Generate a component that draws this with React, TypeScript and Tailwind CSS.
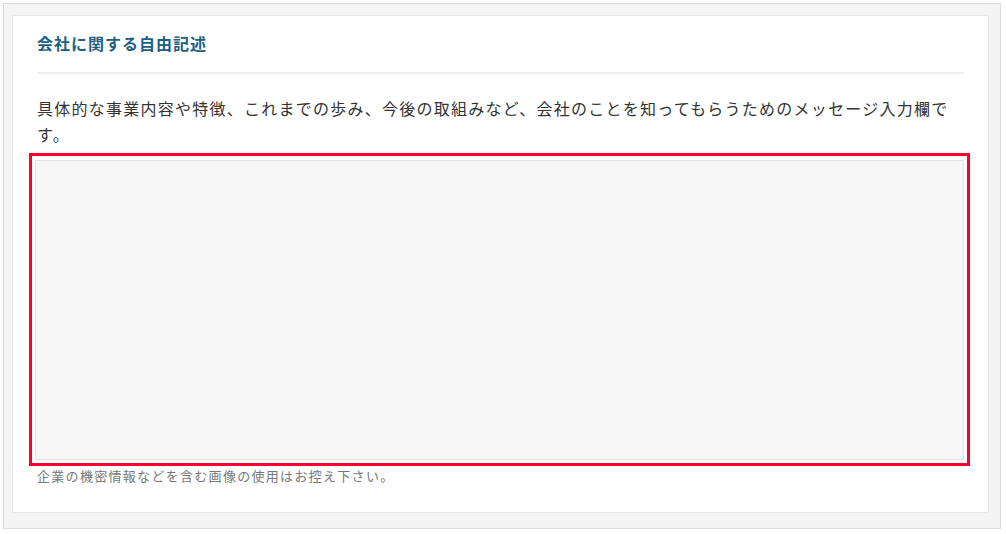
export default function App() {
  return (
    <div className="w-[1006px] h-[534px] bg-white pt-[3px] pl-[3px] font-['Noto_Sans_CJK_JP','Noto_Sans',sans-serif]">
      <div className="w-[998px] h-[526px] border border-[#dcdcdc] bg-[#f4f4f4] pl-[8px] pt-[11px]">
        <div className="w-[977px] h-[498px] bg-white border border-[#e6e6e6] px-[24px] pt-[16px]">
          {/* heading */}
          <h2 className="text-[16px] leading-[22px] font-bold tracking-[1px] text-[#1b6183]">
            会社に関する自由記述
          </h2>
          <div className="mt-[18px] border-b-2 border-[#eeeeee]" />

          <p className="mt-[21px] text-[16px] leading-[26px] tracking-[1.25px] text-[#333333]">
            具体的な事業内容や特徴、これまでの歩み、今後の取組みなど、会社のことを知ってもらうためのメッセージ入力欄です。
          </p>

          {/* input area, highlighted */}
          <div className="relative mt-[13px] -ml-[2px] w-[929px]">
            <textarea className="block w-full h-[300px] resize-none bg-[#f7f7f7] border border-[#e2e2e2] outline-none" />
            <div className="absolute -left-[6px] -top-[7px] -right-[6px] -bottom-[6px] border-[3px] border-[#fd0030] pointer-events-none" />
          </div>

          <p className="mt-[6px] text-[13px] leading-[20px] tracking-[0.1em] text-[#777777]">
            企業の機密情報などを含む画像の使用はお控え下さい。
          </p>
        </div>
      </div>
    </div>
  )
}
